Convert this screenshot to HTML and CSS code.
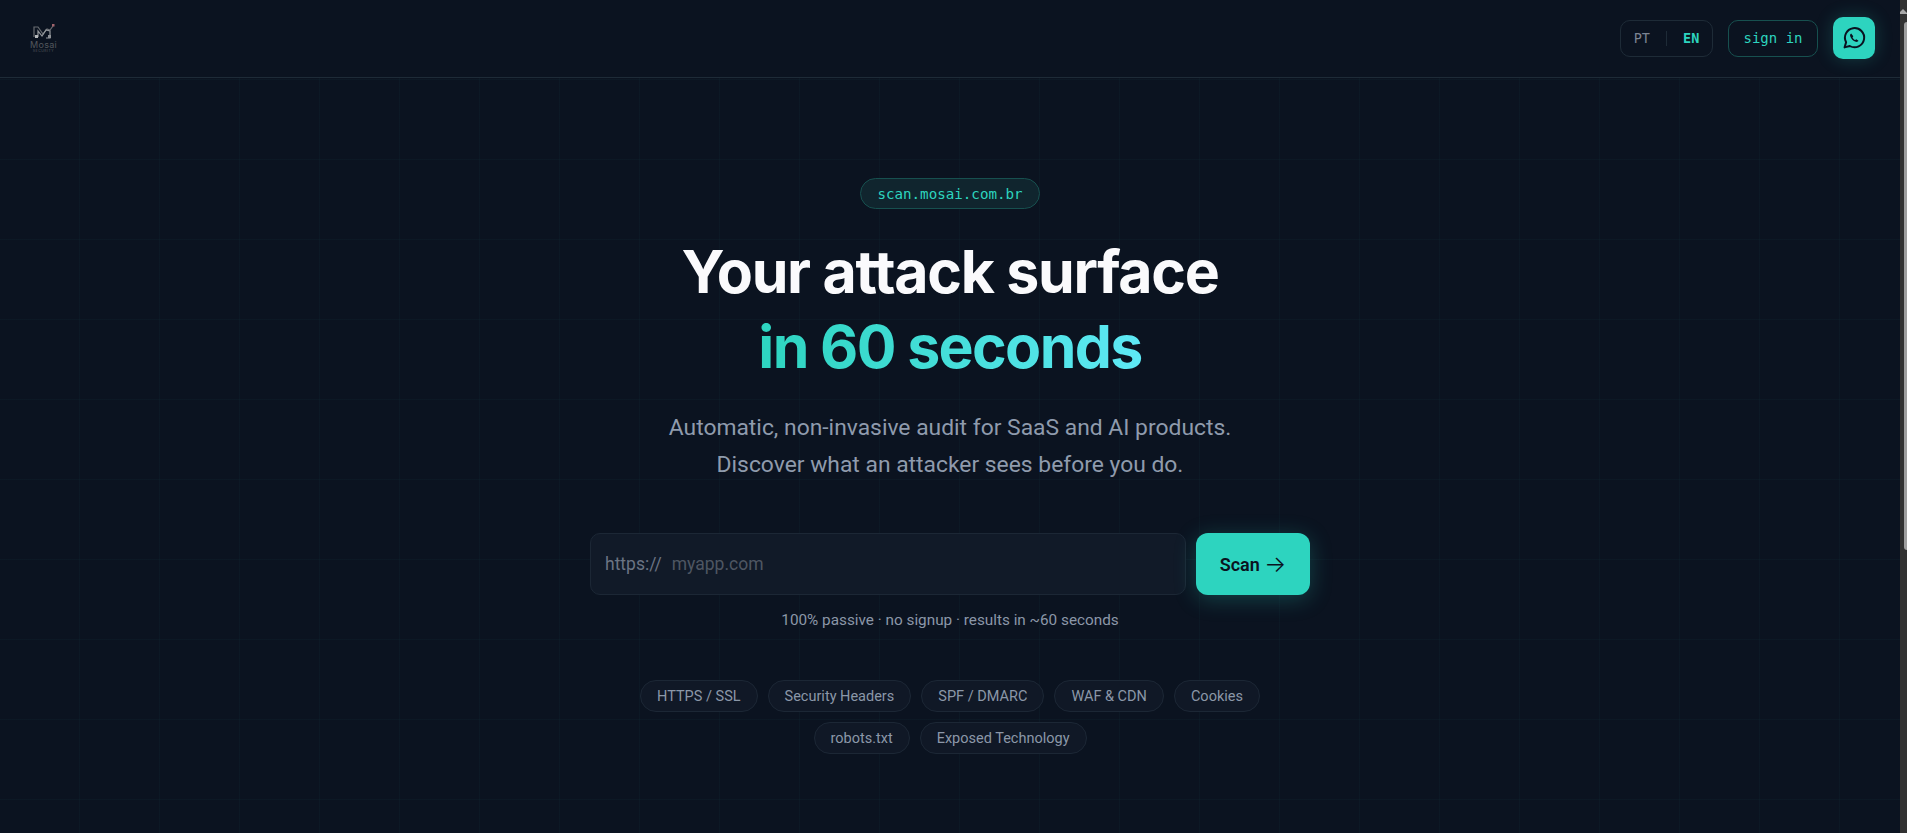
FILE: index.html
```html
<!DOCTYPE html>
<html lang="en">
<head>
    <meta charset="UTF-8">
    <meta name="viewport" content="width=device-width, initial-scale=1.0">
    <title>Mosai Scan</title>
    <link rel="stylesheet" href="styles.css">
</head>
<body>
    <div class="page">
        <nav class="nav">
            <a class="logo" href="#">
                <svg class="logo-mark" viewBox="0 0 22 16" width="22" height="16" fill="none" stroke="#686c71" stroke-width="1.2">
                    <path d="M1 13V3h4l5 7 4-5 3 1 3-4"/>
                    <path d="M5 13V7l4 5 4-6 4 1v7h-4" stroke="#94989c"/>
                    <rect x="2" y="11" width="3" height="3" fill="#b5b8bb" stroke="none"/>
                    <rect x="15" y="11" width="3" height="3" fill="#8f9297" stroke="none"/>
                    <rect x="19" y="0" width="2.5" height="2.5" fill="#a0636b" stroke="none"/>
                </svg>
                <span class="logo-name">Mosai</span>
                <span class="logo-sub">SECURITY</span>
            </a>
            <div class="nav-actions">
                <div class="lang">
                    <span>PT</span>
                    <i class="lang-sep"></i>
                    <span class="lang-on">EN</span>
                </div>
                <a class="signin" href="#">sign in</a>
                <a class="wa" href="#" aria-label="WhatsApp">
                    <svg viewBox="0 0 24 24" width="24" height="24" fill="none" stroke="#0a1220" stroke-width="2" stroke-linejoin="round">
                        <path d="M2.6 21.4l1.5-5.2A9.6 9.6 0 1 1 7.8 20z"/>
                        <path d="M9.2 7.6c-.9.4-1.4 1.4-1 2.6.8 2.6 3 4.8 5.6 5.6 1.3.3 2.3-.2 2.7-1.1l-2.2-1.4-1.1.8c-1.1-.5-2.2-1.6-2.7-2.7l.8-1.2z" fill="#0a1220" stroke="none"/>
                    </svg>
                </a>
            </div>
        </nav>

        <main class="hero">
            <div class="badge">scan.mosai.com.br</div>
            <h1 class="title">Your attack surface<br><span class="title-accent">in 60 seconds</span></h1>
            <p class="lead">Automatic, non-invasive audit for SaaS and AI products.<br>Discover what an attacker sees before you do.</p>

            <form class="scan">
                <label class="scan-field">
                    <span class="scan-prefix">https://</span>
                    <input class="scan-input" type="text" placeholder="myapp.com">
                </label>
                <button class="scan-btn" type="button">Scan <span class="scan-arrow">→</span></button>
            </form>
            <p class="note">100% passive · no signup · results in ~60 seconds</p>

            <div class="chips">
                <span class="chip">HTTPS / SSL</span>
                <span class="chip">Security Headers</span>
                <span class="chip">SPF / DMARC</span>
                <span class="chip">WAF &amp; CDN</span>
                <span class="chip">Cookies</span>
                <span class="chip">robots.txt</span>
                <span class="chip">Exposed Technology</span>
            </div>
        </main>
    </div>

    <div class="rail">
        <i class="rail-arrow"></i>
        <i class="rail-thumb"></i>
    </div>
</body>
</html>
```

FILE: styles.css
```css
* {
    box-sizing: border-box;
}
html, body {
    height: 100%;
}
body {
    margin: 0;
    display: flex;
    overflow: hidden;
    background-color: #0b1320;
    color: #8b97a8;
    font-family: Roboto, Arial, sans-serif;
}
a {
    text-decoration: none;
}
.page {
    flex: 1;
    min-width: 0;
    height: 100%;
    background-image:
        linear-gradient(rgba(45, 212, 191, 0.03) 1px, transparent 1px),
        linear-gradient(90deg, rgba(45, 212, 191, 0.03) 1px, transparent 1px);
    background-size: 80px 80px;
    background-position: -1px -1px;
}

/* top bar */
.nav {
    height: 78px;
    padding: 0 25px 1px 31px;
    display: flex;
    align-items: center;
    justify-content: space-between;
    background-color: #0b1320;
    border-bottom: 1px solid #1e2b37;
}
.logo {
    width: 25px;
    display: flex;
    flex-direction: column;
    align-items: center;
}
.logo-mark {
    display: block;
    margin-left: 1px;
}
.logo-name {
    font-family: Inter, sans-serif;
    font-size: 9px;
    line-height: 9px;
    color: #53575d;
    letter-spacing: 0.3px;
}
.logo-sub {
    font-family: Inter, sans-serif;
    font-size: 3.5px;
    line-height: 4px;
    color: #53575d;
    letter-spacing: 0.5px;
}
.nav-actions {
    display: flex;
    align-items: center;
    gap: 15px;
}
.lang, .signin {
    height: 37px;
    border-radius: 10px;
    font-family: "DejaVu Sans Mono", monospace;
    font-size: 13.5px;
    display: flex;
    align-items: center;
}
.lang {
    width: 93px;
    justify-content: center;
    gap: 16px;
    border: 1px solid #1e2b37;
    color: #7c8492;
}
.lang-sep {
    width: 1px;
    height: 15px;
    background-color: #1e2b37;
}
.lang-on {
    color: #2dd4bf;
    font-weight: 700;
}
.signin {
    width: 90px;
    justify-content: center;
    border: 1px solid #17504f;
    color: #2dd4bf;
    font-size: 14px;
}
.wa {
    width: 42px;
    height: 42px;
    border-radius: 10px;
    background-color: #2dd4bf;
    box-shadow: 0 0 18px rgba(45, 212, 191, 0.22);
    display: flex;
    align-items: center;
    justify-content: center;
}

/* hero */
.hero {
    padding-top: 100px;
    display: flex;
    flex-direction: column;
    align-items: center;
}
.badge {
    width: 180px;
    height: 31px;
    border-radius: 16px;
    border: 1px solid #17504f;
    background-color: #10252e;
    color: #2dd4bf;
    font-family: "DejaVu Sans Mono", monospace;
    font-size: 14.2px;
    display: flex;
    align-items: center;
    justify-content: center;
}
.title {
    margin: 25px 0 0;
    font-family: Inter, sans-serif;
    font-size: 59px;
    font-weight: 700;
    line-height: 75px;
    letter-spacing: -1.3px;
    text-align: center;
    color: #fafafc;
}
.title-accent {
    letter-spacing: -1.65px;
    background: linear-gradient(90deg, #2dd4bf, #5ee9f5);
    -webkit-background-clip: text;
    background-clip: text;
    color: transparent;
}
.lead {
    margin: 25px 0 0;
    font-size: 22.85px;
    line-height: 37px;
    text-align: center;
    color: #8f9bad;
}
.scan {
    margin-top: 50px;
    width: 720px;
    display: flex;
    gap: 10px;
}
.scan-field {
    flex: 1;
    height: 62px;
    padding: 0 14px;
    display: flex;
    align-items: center;
    gap: 10px;
    background-color: #111a28;
    border: 1px solid #1c2735;
    border-radius: 10px;
    font-size: 17.5px;
}
.scan-prefix {
    color: #6b7483;
}
.scan-input {
    flex: 1;
    min-width: 0;
    padding: 0;
    border: 0;
    outline: 0;
    background: none;
    font-family: inherit;
    font-size: 17.5px;
    color: #e5e7eb;
}
.scan-input::placeholder {
    color: #4e5662;
    opacity: 1;
}
.scan-btn {
    width: 114px;
    height: 62px;
    border: 0;
    border-radius: 12px;
    background-color: #2dd4bf;
    box-shadow: 0 4px 22px rgba(45, 212, 191, 0.25);
    color: #0a1220;
    font-family: inherit;
    font-size: 18px;
    font-weight: 600;
    cursor: pointer;
}
.scan-arrow {
    font-family: Inter, sans-serif;
    font-size: 23px;
    font-weight: 300;
    line-height: 1;
    vertical-align: -1px;
}
.note {
    margin: 15px 0 0;
    font-size: 15.3px;
    line-height: 20px;
    color: #8b97a8;
}
.chips {
    margin-top: 50px;
    width: 720px;
    display: flex;
    flex-wrap: wrap;
    justify-content: center;
    gap: 10px;
}
.chip {
    height: 32px;
    padding: 0 16px;
    border-radius: 16px;
    background-color: #101826;
    border: 1px solid #1c2735;
    font-size: 14.5px;
    display: flex;
    align-items: center;
    color: #8b97a8;
}

/* scrollbar strip, cropped at the edge of the window */
.rail {
    width: 7px;
    height: 100%;
    flex-shrink: 0;
    background-color: #323232;
    display: flex;
    flex-direction: column;
    align-items: flex-end;
    overflow: hidden;
}
.rail-arrow {
    margin: 9px -1px 0 0;
    width: 0;
    height: 0;
    border-left: 5px solid transparent;
    border-right: 5px solid transparent;
    border-bottom: 5px solid #a8a8a8;
}
.rail-thumb {
    margin-top: 8px;
    width: 3px;
    height: 528px;
    background-color: #9f9f9f;
    border-radius: 3px 0 0 3px;
}
```
